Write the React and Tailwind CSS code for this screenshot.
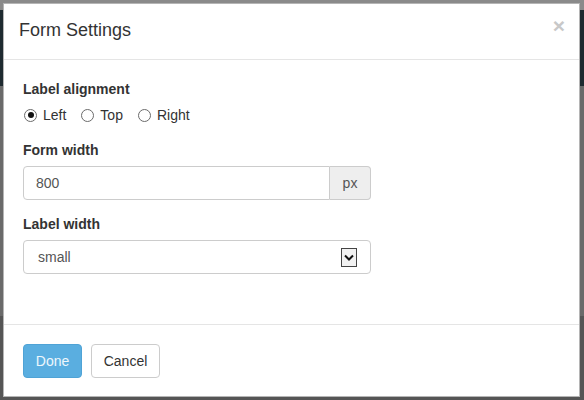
import { useState } from 'react';

function Radio({ label, checked, onClick }) {
  return (
    <label className="flex items-center cursor-pointer" onClick={onClick}>
      <span className="w-[13px] h-[13px] rounded-full border border-[#6b6b6b] bg-white flex items-center justify-center">
        {checked && <span className="w-[6px] h-[6px] rounded-full bg-[#111]" />}
      </span>
      <span className="ml-[6px]">{label}</span>
    </label>
  );
}

export default function App() {
  const [align, setAlign] = useState('left');
  const [width, setWidth] = useState('800');

  return (
    <div
      className="relative w-[584px] h-[400px] overflow-hidden bg-[#6e6e6e] text-[14px] text-[#333]"
      style={{ fontFamily: '"Liberation Sans", Arial, sans-serif' }}
    >
      {/* page behind the overlay */}
      <div className="h-[10px] bg-[#8a8a8a]" />
      <div className="h-[76px] bg-[#1e2a30]" />
      <div className="h-[230px] bg-[#6a6a6a]" />
      <div className="bg-[#555] h-[84px]" />

      <div className="absolute left-[3px] top-[3px] w-[577px] h-[394px] bg-white border border-[#b5b5b5] flex flex-col">
        <div className="h-[56px] border-b border-[#e5e5e5] flex items-center justify-between pl-[15px] pr-[14px]">
          <h4 className="text-[18px] text-[#333] leading-none mt-[-3px]">Form Settings</h4>
          <button className="text-[21px] font-bold text-[#c8c8c8] leading-none mt-[-12px]">×</button>
        </div>

        <div className="h-[264px] pl-[19px] pt-[19px]">
          <div className="font-bold leading-5">Label alignment</div>
          <div className="flex items-center gap-[15px] mt-[6px] h-5 pl-[1px]">
            <Radio label="Left" checked={align === 'left'} onClick={() => setAlign('left')} />
            <Radio label="Top" checked={align === 'top'} onClick={() => setAlign('top')} />
            <Radio label="Right" checked={align === 'right'} onClick={() => setAlign('right')} />
          </div>

          <div className="font-bold leading-5 mt-[15px]">Form width</div>
          <div className="flex mt-[6px] w-[348px] h-[34px]">
            <input
              value={width}
              onChange={e => setWidth(e.target.value)}
              className="flex-1 min-w-0 border border-[#ccc] rounded-l-[4px] px-3 text-[14px] text-[#555] outline-none"
            />
            <span className="w-[41px] border border-l-0 border-[#ccc] rounded-r-[4px] bg-[#eee] text-[#555] flex items-center justify-center">
              px
            </span>
          </div>

          <div className="font-bold leading-5 mt-[14px]">Label width</div>
          <div className="mt-[6px] w-[348px] h-[34px] border border-[#ccc] rounded-[4px] flex items-center justify-between pl-[14px] pr-[13px] text-[#555]">
            <span>small</span>
            <span className="w-[16px] h-[19px] border border-[#444] bg-[#f2f2f2] flex items-center justify-center">
              <svg width="10" height="7" viewBox="0 0 10 7">
                <path d="M1 1.5 L5 5.5 L9 1.5" fill="none" stroke="#111" strokeWidth="2" />
              </svg>
            </span>
          </div>
        </div>

        <div className="flex-1 border-t border-[#e5e5e5] pl-[19px] pt-[19px] flex gap-[9px]">
          <button className="w-[59px] h-[34px] rounded-[4px] bg-[#5aaee0] border border-[#4fa3d6] text-white/90">
            Done
          </button>
          <button className="w-[69px] h-[34px] rounded-[4px] bg-white border border-[#ccc] text-[#333]">
            Cancel
          </button>
        </div>
      </div>
    </div>
  );
}
